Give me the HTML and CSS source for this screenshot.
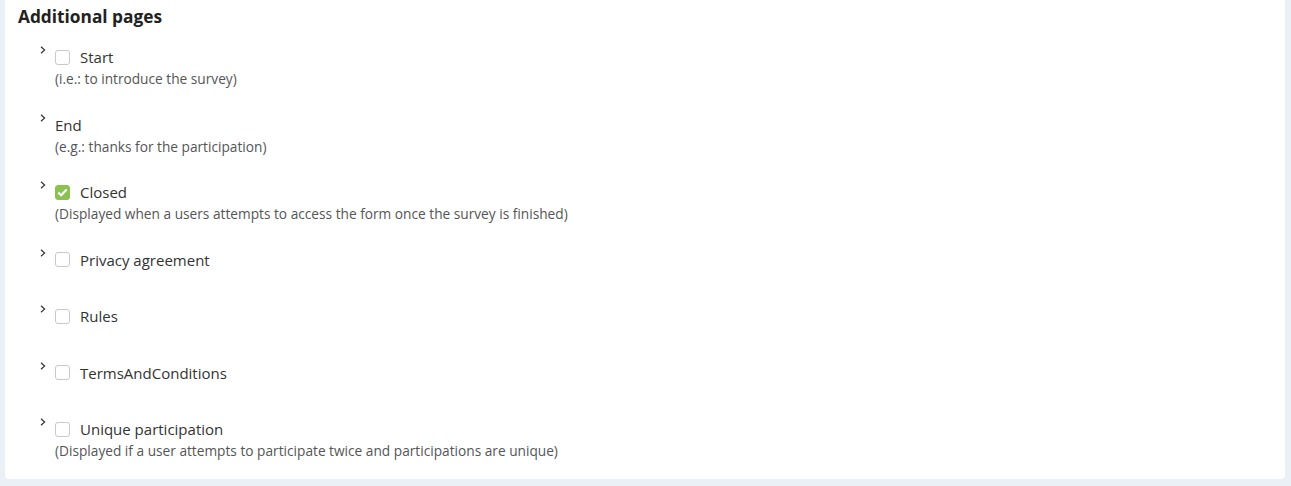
FILE: index.html
```html
<!DOCTYPE html>
<html>
<head>
  <title>Additional pages</title>
  <link rel="stylesheet" href="styles.css">
</head>
<body>
  <div class="card">
    <h2 class="card-title">Additional pages</h2>
    <ul class="page-list">
      <li class="page-item">
        <span class="chevron"><svg width="6" height="8" viewBox="0 0 6 8"><path d="M1 0.8 L4.6 4 L1 7.2" fill="none" stroke="#333" stroke-width="1.2"/></svg></span>
        <div class="page-body">
          <label class="page-label"><span class="check"></span>Start</label>
          <div class="page-desc">(i.e.: to introduce the survey)</div>
        </div>
      </li>
      <li class="page-item">
        <span class="chevron"><svg width="6" height="8" viewBox="0 0 6 8"><path d="M1 0.8 L4.6 4 L1 7.2" fill="none" stroke="#333" stroke-width="1.2"/></svg></span>
        <div class="page-body">
          <label class="page-label">End</label>
          <div class="page-desc">(e.g.: thanks for the participation)</div>
        </div>
      </li>
      <li class="page-item">
        <span class="chevron"><svg width="6" height="8" viewBox="0 0 6 8"><path d="M1 0.8 L4.6 4 L1 7.2" fill="none" stroke="#333" stroke-width="1.2"/></svg></span>
        <div class="page-body">
          <label class="page-label"><span class="check checked"><svg width="11" height="9" viewBox="0 0 11 9"><path d="M1.3 4.6 L4.2 7.3 L9.7 1.6" fill="none" stroke="#fff" stroke-width="2.2"/></svg></span>Closed</label>
          <div class="page-desc">(Displayed when a users attempts to access the form once the survey is finished)</div>
        </div>
      </li>
      <li class="page-item">
        <span class="chevron"><svg width="6" height="8" viewBox="0 0 6 8"><path d="M1 0.8 L4.6 4 L1 7.2" fill="none" stroke="#333" stroke-width="1.2"/></svg></span>
        <div class="page-body">
          <label class="page-label"><span class="check"></span>Privacy agreement</label>
        </div>
      </li>
      <li class="page-item">
        <span class="chevron"><svg width="6" height="8" viewBox="0 0 6 8"><path d="M1 0.8 L4.6 4 L1 7.2" fill="none" stroke="#333" stroke-width="1.2"/></svg></span>
        <div class="page-body">
          <label class="page-label"><span class="check"></span>Rules</label>
        </div>
      </li>
      <li class="page-item">
        <span class="chevron"><svg width="6" height="8" viewBox="0 0 6 8"><path d="M1 0.8 L4.6 4 L1 7.2" fill="none" stroke="#333" stroke-width="1.2"/></svg></span>
        <div class="page-body">
          <label class="page-label"><span class="check"></span>TermsAndConditions</label>
        </div>
      </li>
      <li class="page-item">
        <span class="chevron"><svg width="6" height="8" viewBox="0 0 6 8"><path d="M1 0.8 L4.6 4 L1 7.2" fill="none" stroke="#333" stroke-width="1.2"/></svg></span>
        <div class="page-body">
          <label class="page-label"><span class="check"></span>Unique participation</label>
          <div class="page-desc">(Displayed if a user attempts to participate twice and participations are unique)</div>
        </div>
      </li>
    </ul>
  </div>
</body>
</html>
```

FILE: styles.css
```css
body {
  margin: 0;
  background-color: #ebf0f7;
  font-family: "Open Sans", Arial, sans-serif;
  color: #333;
}
.card {
  margin: 0 6px 0 5px;
  padding: 5px 13px 18px;
  background-color: #fff;
  border-radius: 0 0 4px 4px;
}
.card-title {
  margin: 0;
  font-size: 17.3px;
  font-weight: bold;
  line-height: 24px;
  color: #222;
}
.page-list {
  list-style: none;
  margin: 17px 0 0;
  padding: 0 0 0 22px;
  display: flex;
  flex-direction: column;
  gap: 24.5px;
}
.page-item {
  display: flex;
}
.chevron {
  width: 15px;
}
.chevron svg {
  display: block;
}
.page-body {
  min-height: 32px;
}
.page-label {
  display: flex;
  align-items: center;
  font-size: 15px;
  line-height: 22px;
  color: #333;
}
.check {
  width: 13px;
  height: 13px;
  margin-right: 10px;
  border: 1px solid #c9c9c9;
  border-radius: 3px;
  display: flex;
  align-items: center;
  justify-content: center;
}
.check.checked {
  background-color: #8cc152;
  border-color: #8cc152;
}
.page-desc {
  font-size: 13.7px;
  line-height: 21px;
  color: #555;
}
```
